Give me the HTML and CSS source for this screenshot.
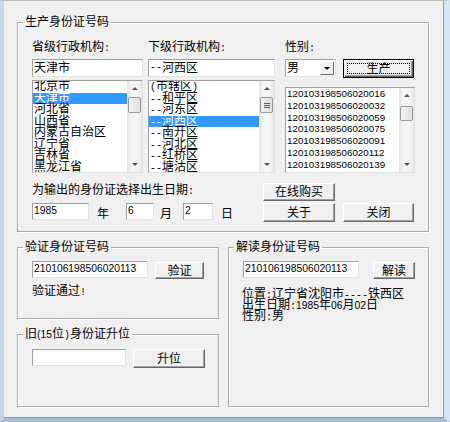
FILE: index.html
```html
<!DOCTYPE html>
<html>
<head>
<meta charset="UTF-8">
<title>身份证号码生成器</title>
<link rel="stylesheet" href="styles.css">
</head>
<body>
<div id="wnd">
<div id="client">

<fieldset class="grp" id="gMake">
<legend>生产身份证号码</legend>
<div class="topRow">

  <div class="col colProv">
    <div class="lbl">省级行政机构<span class="h">:</span></div>
    <div class="edit">天津市</div>
    <div class="list lstArea">
      <div class="items">
        <div>北京市</div>
        <div class="sel">天津市</div>
        <div>河北省</div>
        <div>山西省</div>
        <div>内蒙古自治区</div>
        <div>辽宁省</div>
        <div>吉林省</div>
        <div>黑龙江省</div>
      </div>
      <div class="sb"><div class="arr up"></div><div class="track"><div class="thumb"></div></div><div class="arr down"></div></div>
    </div>
  </div>

  <div class="col colCity">
    <div class="lbl">下级行政机构<span class="h">:</span></div>
    <div class="edit"><span class="h">--</span>河西区</div>
    <div class="list lstArea">
      <div class="items">
        <div><span class="h">(</span>市辖区<span class="h">)</span></div>
        <div><span class="h">--</span>和平区</div>
        <div><span class="h">--</span>河东区</div>
        <div class="sel"><span class="h">--</span>河西区</div>
        <div><span class="h">--</span>南开区</div>
        <div><span class="h">--</span>河北区</div>
        <div><span class="h">--</span>红桥区</div>
        <div><span class="h">--</span>塘沽区</div>
      </div>
      <div class="sb"><div class="arr up"></div><div class="track"><div class="thumb grip"></div></div><div class="arr down"></div></div>
    </div>
  </div>

  <div class="col colSex">
    <div class="lbl">性别<span class="h">:</span></div>
    <div class="sexRow">
      <div class="combo"><span class="comboText">男</span><span class="drop"></span></div>
      <div class="btn btnDef"><span class="focus">生产</span></div>
    </div>
    <div class="list lstIds">
      <div class="items num">
        <div>120103198506020016</div>
        <div>120103198506020032</div>
        <div>120103198506020059</div>
        <div>120103198506020075</div>
        <div>120103198506020091</div>
        <div>120103198506020112</div>
        <div>120103198506020139</div>
      </div>
      <div class="sb"><div class="arr up"></div><div class="track"><div class="thumb low"></div></div><div class="arr down"></div></div>
    </div>
  </div>

</div>

<div class="dateRow">
  <div class="dateBox">
    <div class="lbl dateLbl">为输出的身份证选择出生日期<span class="h">:</span></div>
    <div class="ymd">
      <div class="edit small num eYear">1985</div>
      <span class="unit uYear">年</span>
      <div class="edit small num eMonth">6</div>
      <span class="unit uMonth">月</span>
      <div class="edit small num eDay">2</div>
      <span class="unit">日</span>
    </div>
  </div>
  <div class="btnCol">
    <div class="btn btnShort">在线购买</div>
    <div class="btnRow">
      <div class="btn">关于</div>
      <div class="btn">关闭</div>
    </div>
  </div>
</div>
</fieldset>

<div class="lower">
  <div class="lowerLeft">
    <fieldset class="grp" id="gCheck">
      <legend>验证身份证号码</legend>
      <div class="grpRow">
        <div class="edit small num eCheck">210106198506020113</div>
        <div class="btn btnSmall bCheck">验证</div>
      </div>
      <div class="msg">验证通过<span class="h">!</span></div>
    </fieldset>

    <fieldset class="grp" id="gUp">
      <legend>旧<span class="num">(15</span>位<span class="h">)</span>身份证升位</legend>
      <div class="grpRow">
        <div class="edit small eUp"></div>
        <div class="btn bUp">升位</div>
      </div>
    </fieldset>
  </div>

  <fieldset class="grp" id="gRead">
    <legend>解读身份证号码</legend>
    <div class="grpRow">
      <div class="edit small num eRead">210106198506020113</div>
      <div class="btn btnSmall bRead">解读</div>
    </div>
    <div class="info">
      <div>位置<span class="h">:</span>辽宁省沈阳市<span class="h">----</span>铁西区</div>
      <div>出生日期<span class="h">:</span><span class="num">1985</span>年<span class="num">06</span>月<span class="num">02</span>日</div>
      <div>性别<span class="h">:</span>男</div>
    </div>
  </fieldset>
</div>

</div>
</div>
</body>
</html>
```

FILE: styles.css
```css
body{
margin: 0;
font-family: "Liberation Sans", "Noto Sans CJK SC", sans-serif;
font-size: 12px;
line-height: 12px;
color: #000;
}

/* half-width ascii inside chinese text */
.h{
font-family: "Liberation Mono", monospace;
font-size: 10px;
line-height: 1;
}

.num{
font-family: "Liberation Sans", sans-serif;
font-size: 10.3px;
line-height: 1;
}

#wnd{
width: 450px;
height: 422px;
box-sizing: border-box;
border-style: solid;
border-width: 1px 6px 4px 4px;
border-color: #b6c4b6 #d9e6f3 #a3bddb #c8d7e6;
background: #f0f0f0;
}

#client{
height: 100%;
box-sizing: border-box;
border-right: 1px solid #8b9db3;
border-bottom: 1px solid #8b9db3;
padding: 15px 0 0 13px;
}

.grp{
margin: 0;
padding: 0;
min-width: 0;
box-sizing: border-box;
border: 1px solid #a9a9a9;
box-shadow: inset 1px 1px 0 #fff, 1px 1px 0 #fff;
}

.grp legend{
margin-left: 5px;
padding: 0 2px;
line-height: 12px;
}

#gMake{
width: 412px;
height: 216px;
}

.topRow{
display: flex;
padding: 13px 0 0 14px;
}

.col{
display: flex;
flex-direction: column;
}

.colProv{
width: 111px;
margin-right: 5px;
}

.colCity{
width: 127px;
margin-right: 10px;
}

.colSex{
width: 130px;
}

.lbl{
height: 12px;
margin-bottom: 6px;
white-space: nowrap;
}

.edit{
height: 18px;
box-sizing: border-box;
display: flex;
align-items: center;
padding-left: 1px;
background: #fff;
border: 1px solid;
border-color: #a0a0a0 #e3e3e3 #e3e3e3 #a0a0a0;
white-space: nowrap;
overflow: hidden;
}

.edit.small{
height: 17px;
}

.list{
display: flex;
box-sizing: border-box;
background: #fff;
border: 1px solid;
border-color: #a0a0a0 #e3e3e3 #e3e3e3 #a0a0a0;
overflow: hidden;
}

.lstArea{
height: 93px;
margin-top: 3px;
}

.lstIds{
height: 86px;
margin-top: 9px;
}

.items{
flex: 1;
overflow: hidden;
line-height: 11.5px;
}

.items div{
height: 11.5px;
padding-left: 1px;
white-space: nowrap;
}

.items.num{
font-size: 9.8px;
line-height: 11.75px;
}

.items.num div{
height: 11.75px;
}

.sel{
background: #3399ff;
color: #fff;
}

/* scrollbar */
.sb{
width: 15px;
display: flex;
flex-direction: column;
background: linear-gradient(to right, #e4e4e4, #f5f5f5 30%, #f5f5f5 70%, #e6e6e6);
}

.arr{
height: 15px;
display: flex;
align-items: center;
justify-content: center;
}

.arr::before{
content: "";
border-left: 3px solid transparent;
border-right: 3px solid transparent;
}

.up::before{
border-bottom: 3px solid #555;
}

.down::before{
border-top: 3px solid #555;
}

.track{
flex: 1;
}

.thumb{
height: 16px;
margin: 1px 1px 0;
box-sizing: border-box;
border: 1px solid #979797;
border-radius: 2px;
background: linear-gradient(to right, #f4f4f4, #dedede);
}

.thumb.grip{
display: flex;
align-items: center;
justify-content: center;
}

.thumb.grip::after{
content: "";
width: 6px;
height: 5px;
background: repeating-linear-gradient(#5a5a5a 0 1px, transparent 1px 2px);
}

.thumb.low{
height: 15px;
margin-top: 3px;
}

.sexRow{
display: flex;
}

.combo{
width: 51px;
height: 18px;
box-sizing: border-box;
display: flex;
align-items: center;
background: #fff;
border: 1px solid;
border-color: #a0a0a0 #e3e3e3 #e3e3e3 #a0a0a0;
margin-right: 7px;
}

.comboText{
flex: 1;
padding-left: 1px;
}

.drop{
width: 14px;
height: 14px;
box-sizing: border-box;
margin-right: 1px;
display: flex;
align-items: center;
justify-content: center;
background: #f0f0f0;
border: 1px solid;
border-color: #fff #696969 #696969 #fff;
}

.drop::before{
content: "";
border-left: 3px solid transparent;
border-right: 3px solid transparent;
border-top: 3px solid #000;
}

.btn{
width: 72px;
height: 19px;
box-sizing: border-box;
display: flex;
align-items: center;
justify-content: center;
background: #f0f0f0;
border: 1px solid;
border-color: #fff #696969 #696969 #fff;
box-shadow: inset -1px -1px 0 #a0a0a0;
white-space: nowrap;
}

.btnDef{
width: 71px;
border: 1px solid #000;
box-shadow: inset 1px 1px 0 #fff, inset -1px -1px 0 #696969, inset -2px -2px 0 #a0a0a0;
}

.focus{
flex: 1;
align-self: stretch;
margin: 3px;
display: flex;
align-items: center;
justify-content: center;
border: 1px dotted #000;
}

.dateRow{
display: flex;
margin-top: 10px;
padding-left: 14px;
}

.dateBox{
width: 231px;
}

.dateLbl{
margin-top: 1px;
margin-bottom: 7px;
}

.ymd{
display: flex;
align-items: flex-end;
}

.eYear{
width: 57px;
}

.eMonth{
width: 28px;
}

.eDay{
width: 30px;
}

.unit{
margin: 0 11px 0 8px;
}

.uYear{
margin-right: 17px;
}

.uMonth{
margin: 0 11px 0 6px;
}

.btnCol{
display: flex;
flex-direction: column;
gap: 2px;
}

.btnShort{
height: 18px;
}

.btnRow{
display: flex;
gap: 8px;
}

.btnRow .btn:last-child{
width: 71px;
}

.lower{
display: flex;
gap: 9px;
margin-top: 9px;
}

.lowerLeft{
width: 202px;
display: flex;
flex-direction: column;
gap: 9px;
}

#gCheck{
height: 78px;
}

#gUp{
height: 79px;
}

#gRead{
width: 201px;
height: 166px;
}

.grpRow{
display: flex;
align-items: flex-start;
padding: 8px 0 0 14px;
}

.btnSmall{
height: 17px;
margin-top: 1px;
}

.eCheck{
width: 116px;
margin-right: 7px;
}

.bCheck{
width: 49px;
}

.eUp{
width: 94px;
margin-right: 7px;
}

.bUp{
width: 72px;
}

.eRead{
width: 116px;
margin-right: 14px;
}

.bRead{
width: 42px;
}

.msg{
margin: 6px 0 0 14px;
}

.info{
margin: 10px 0 0 13px;
line-height: 11px;
white-space: nowrap;
}

.info div{
height: 11px;
}
```
